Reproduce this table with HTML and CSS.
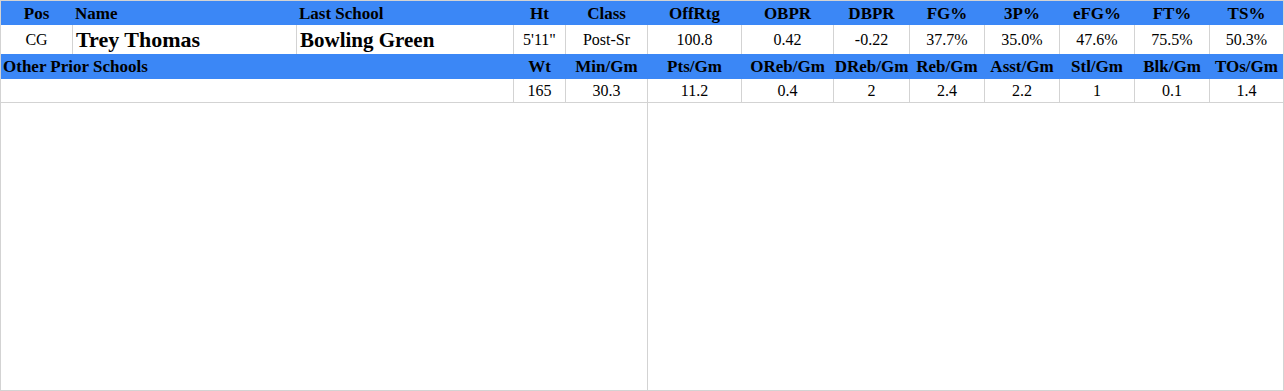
FILE: index.html
```html
<!DOCTYPE html>
<html>
<head>
<meta charset="utf-8">
<link rel="stylesheet" href="styles.css">
</head>
<body>
<div class="sheet">
  <div class="row hdr r1">
    <div class="c">Pos</div>
    <div class="c left">Name</div>
    <div class="c left">Last School</div>
    <div class="c">Ht</div>
    <div class="c">Class</div>
    <div class="c">OffRtg</div>
    <div class="c">OBPR</div>
    <div class="c">DBPR</div>
    <div class="c">FG%</div>
    <div class="c">3P%</div>
    <div class="c">eFG%</div>
    <div class="c">FT%</div>
    <div class="c">TS%</div>
  </div>
  <div class="row data r2">
    <div class="c">CG</div>
    <div class="c left name">Trey Thomas</div>
    <div class="c left school">Bowling Green</div>
    <div class="c">5'11"</div>
    <div class="c">Post-Sr</div>
    <div class="c">100.8</div>
    <div class="c">0.42</div>
    <div class="c">-0.22</div>
    <div class="c">37.7%</div>
    <div class="c">35.0%</div>
    <div class="c">47.6%</div>
    <div class="c">75.5%</div>
    <div class="c">50.3%</div>
  </div>
  <div class="row hdr r3">
    <div class="c left span3 other">Other Prior Schools</div>
    <div class="c">Wt</div>
    <div class="c">Min/Gm</div>
    <div class="c">Pts/Gm</div>
    <div class="c">OReb/Gm</div>
    <div class="c">DReb/Gm</div>
    <div class="c">Reb/Gm</div>
    <div class="c">Asst/Gm</div>
    <div class="c">Stl/Gm</div>
    <div class="c">Blk/Gm</div>
    <div class="c">TOs/Gm</div>
  </div>
  <div class="row data r4">
    <div class="c span3"></div>
    <div class="c">165</div>
    <div class="c">30.3</div>
    <div class="c">11.2</div>
    <div class="c">0.4</div>
    <div class="c">2</div>
    <div class="c">2.4</div>
    <div class="c">2.2</div>
    <div class="c">1</div>
    <div class="c">0.1</div>
    <div class="c">1.4</div>
  </div>
  <div class="panels">
    <div class="panel first"></div>
    <div class="panel"></div>
  </div>
</div>
</body>
</html>
```

FILE: styles.css
```css
html, body {
  margin: 0;
  padding: 0;
  background: #ffffff;
}

body {
  font-family: "Liberation Serif", "Times New Roman", serif;
  color: #000;
}

.sheet {
  width: 1284px;
  height: 391px;
  box-sizing: border-box;
  border: 1px solid #d3d3d3;
  display: flex;
  flex-direction: column;
}

.row {
  display: grid;
  grid-template-columns: 71px 224px 217px 52px 82px 94px 92px 76px 75px 75px 75px 75px 74px;
}

.c {
  box-sizing: border-box;
  display: flex;
  align-items: center;
  justify-content: center;
  white-space: nowrap;
  overflow: visible;
  padding-top: 1px;
}

.c + .c {
  border-left: 1px solid #d3d3d3;
}

.left {
  justify-content: flex-start;
  padding-left: 2px;
}

.span3 {
  grid-column: span 3;
}

.hdr {
  background: #3b87f6;
  font-weight: bold;
  font-size: 17px;
}

.hdr .c + .c {
  border-left-color: transparent;
}

.r1 { height: 24px; }
.r2 { height: 29px; }
.r3 { height: 25px; }
.r4 {
  height: 23px;
  border-bottom: 1px solid #d3d3d3;
}

.data {
  font-size: 16px;
}

.other {
  padding-left: 2px;
}

.name {
  font-size: 22px;
  font-weight: bold;
  padding-left: 3px;
}

.school {
  font-size: 21px;
  font-weight: bold;
  padding-left: 3px;
}

.panels {
  flex: 1;
  display: flex;
}

.panel {
  flex: 1;
}

.panel.first {
  flex: 0 0 646px;
  border-right: 1px solid #d3d3d3;
}
```
